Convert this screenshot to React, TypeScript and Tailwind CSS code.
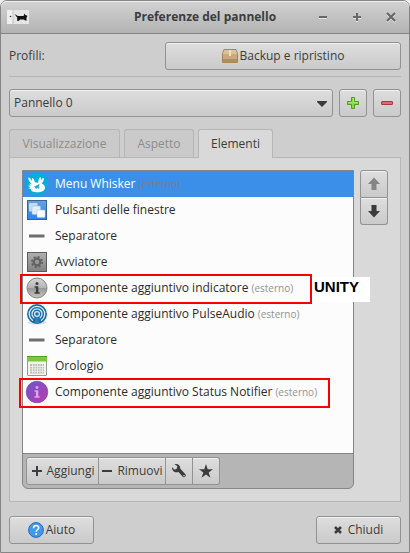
import { useState } from "react";
import type { ReactNode } from "react";
import clsx from "clsx";

const button =
  "flex items-center justify-center border border-[#929292] bg-linear-to-b from-[#dedede] to-[#cacaca] text-[#3c3c3c] shadow-[inset_0_1px_0_#f0f0f0]";

const WhiskerIcon = () => (
  <svg width="24" height="24" viewBox="0 0 24 24">
    <circle cx="12" cy="12" r="11.5" fill="#08acd8" />
    <path
      d="M3.500 5.500C4.300 5 5.800 6.600 7 9.300L6.900 6.300C7.900 5.500 9.400 7.500 9.900 10.300L13.300 10.800C13.300 8 14.200 5 15.300 5.200 16.200 5.400 16 7.500 15.800 9.300 16.500 7.300 17.500 5.700 18.600 6.200 19.700 6.900 18.300 9.700 16.800 11.500 19 12.500 20.300 14.300 20 16.200 19.500 19 16 20.400 12.500 20.300 8.500 20.300 5.800 19 6 17.200L3.200 16 5.500 15.600 2.800 13.600 5.800 13.800 4 11.500 7 12.600C5 10.500 2.600 6.500 3.500 5.500Z"
      fill="#fff"
    />
    <path d="m9 14.700 3.800-1.700 1.700-1.500-.5 2.700-3 2.800-.8-1.500zM12.500 15.500l2-1-.7 2.500z" fill="#08acd8" />
  </svg>
);

const WindowsIcon = () => (
  <svg width="24" height="24" viewBox="0 0 24 24">
    <defs>
      <linearGradient id="win" x2="0" y2="1">
        <stop stopColor="#6aa2d8" />
        <stop offset="1" stopColor="#2c83ea" />
      </linearGradient>
    </defs>
    <rect x="2.500" y="2.500" width="19" height="19" fill="url(#win)" stroke="#376397" />
    <rect x="4" y="5" width="8.500" height="8.500" rx="1" fill="#c4dcf4" />
    <rect x="7" y="8" width="8.500" height="8.500" rx="1" fill="#e2edf8" stroke="#9abde0" strokeWidth=".5" />
    <rect x="12" y="12" width="8" height="7.500" rx="1" fill="#fff" stroke="#9abde0" strokeWidth=".5" />
  </svg>
);

const SeparatorIcon = () => (
  <svg width="24" height="24" viewBox="0 0 24 24">
    <rect x="4" y="10.500" width="15.500" height="3" rx="0.500" fill="#6d6d6d" />
  </svg>
);

const LauncherIcon = () => (
  <svg width="24" height="24" viewBox="0 0 24 24">
    <defs>
      <linearGradient id="launch" x2="0" y2="1">
        <stop stopColor="#b0b0b0" />
        <stop offset="1" stopColor="#818181" />
      </linearGradient>
    </defs>
    <rect x="2.500" y="2.500" width="19" height="19" fill="url(#launch)" stroke="#5c5c5c" />
    <circle cx="12" cy="12" r="3.300" fill="none" stroke="#626262" strokeWidth="2.200" />
    <circle cx="12" cy="12" r="5" fill="none" stroke="#626262" strokeWidth="2" strokeDasharray="2 1.927" />
  </svg>
);

const IndicatorIcon = () => (
  <svg width="24" height="24" viewBox="0 0 24 24">
    <defs>
      <linearGradient id="ind" x2="0" y2="1">
        <stop stopColor="#d8d8d8" />
        <stop offset=".49" stopColor="#b4b4b4" />
        <stop offset=".51" stopColor="#989898" />
        <stop offset="1" stopColor="#c4c4c4" />
      </linearGradient>
    </defs>
    <circle cx="12" cy="12" r="10" fill="url(#ind)" stroke="#868686" />
    <circle cx="12" cy="7.500" r="1.500" fill="#3d3d3d" />
    <path d="M9.500 10.200h3.800v6h1.400v1.600H9.500v-1.600h1.400v-4.400H9.500z" fill="#3d3d3d" />
  </svg>
);

const PulseIcon = () => (
  <svg width="24" height="24" viewBox="0 0 24 24">
    <ellipse cx="12" cy="20.500" rx="9.500" ry="2" fill="#ddd" />
    <circle cx="12" cy="12" r="10" fill="#1c6ba4" />
    <g fill="none" stroke="#d8edf9" strokeWidth="1.300" strokeLinecap="round">
      <path d="M7.500 18.300a7.700 7.700 0 1 1 9 0" />
      <path d="M8.800 15.800a5 5 0 1 1 6.400 0" />
      <circle cx="12" cy="12" r="2.400" />
    </g>
    <path d="m11.200 15h1.600l1.600 6.500H9.600z" fill="#2f83ba" />
  </svg>
);

const ClockIcon = () => (
  <svg width="24" height="24" viewBox="0 0 24 24">
    <rect x="2.500" y="3.500" width="19" height="18" rx=".5" fill="#f4f4f0" stroke="#949c8c" />
    <path d="M2 2.500h20v5H2z" fill="#7cc73d" />
    <path d="M2 2.500h20" stroke="#589e24" />
    <rect x="5" y="10" width="14" height="9.500" fill="#bdbdb5" />
    <path d="M5 12.500h14M5 14.900h14M5 17.300h14M7.500 10v9.500M10 10v9.500M12.500 10v9.500M15 10v9.500M17.500 10v9.500" stroke="#f3f3ef" strokeWidth=".8" />
  </svg>
);

const StatusIcon = () => (
  <svg width="24" height="24" viewBox="0 0 24 24">
    <defs>
      <linearGradient id="status" x2="1" y2="1">
        <stop stopColor="#6659cb" />
        <stop offset="1" stopColor="#c337ac" />
      </linearGradient>
    </defs>
    <circle cx="12" cy="12" r="10.800" fill="url(#status)" stroke="#784aa5" strokeWidth=".7" />
    <circle cx="12" cy="7.500" r="1.400" fill="#d7a8e6" />
    <path d="M9.500 10.200h3.800v6h1.400v1.600H9.500v-1.600h1.400v-4.400H9.500z" fill="#d7a8e6" />
  </svg>
);

type Item = { name: string; icon: ReactNode; external?: boolean; mark?: ReactNode };

const items: Item[] = [
  { name: "Menu Whisker", icon: <WhiskerIcon />, external: true },
  { name: "Pulsanti delle finestre", icon: <WindowsIcon /> },
  { name: "Separatore", icon: <SeparatorIcon /> },
  { name: "Avviatore", icon: <LauncherIcon /> },
  {
    name: "Componente aggiuntivo indicatore",
    icon: <IndicatorIcon />,
    external: true,
    mark: (
      <>
        <span className="pointer-events-none absolute -top-px -left-[3px] h-[30px] w-[292px] border-2 border-[#f60000]" />
        <strong className="absolute top-[2px] left-[289px] h-[25px] w-[58px] bg-white pl-[2px] font-['Liberation_Sans',Arial,sans-serif] text-[15px] leading-5 text-black">
          UNITY
        </strong>
      </>
    ),
  },
  { name: "Componente aggiuntivo PulseAudio", icon: <PulseIcon />, external: true },
  { name: "Separatore", icon: <SeparatorIcon /> },
  { name: "Orologio", icon: <ClockIcon /> },
  {
    name: "Componente aggiuntivo Status Notifier",
    icon: <StatusIcon />,
    external: true,
    mark: <span className="pointer-events-none absolute -top-px -left-1 h-[30px] w-[311px] border-2 border-[#f60000]" />,
  },
];

const TitleBar = () => (
  <header className="flex h-[33px] items-center rounded-t-md border-b border-[#858585] bg-linear-to-b from-[#d2d2d2] to-[#b3b3b3] pr-3 pl-1.5 shadow-[inset_0_1px_0_#eeeeee]">
    <svg width="22" height="14" viewBox="0 0 22 14" className="shrink-0">
      <rect width="5.500" height="14" rx=".5" fill="#eee" />
      <rect x="6.500" width="15.500" height="14" fill="#e5e5e5" />
      <circle cx="3.500" cy="6.500" r=".8" fill="#333" />
      <path d="m7.500 4 2.500 1.500 1 .5h5.500l1-2.500.8 1.500 2.200.8-1 2v2.700H18l-1-1h-4l-1 1.300h-2l.3-3z" fill="#111" />
    </svg>
    <h1 className="flex-1 pl-16 text-center text-[12px] font-bold text-[#3d3d3d]">Preferenze del pannello</h1>
    <div className="flex gap-[22px] text-[#686868]">
      <button aria-label="Minimizza" className="size-3">
        <svg width="12" height="12" viewBox="0 0 12 12" stroke="currentColor" strokeWidth="2">
          <path d="M2 7.500h8" stroke="#e4e4e4" strokeWidth="1" />
          <path d="M2 6h8" />
        </svg>
      </button>
      <button aria-label="Massimizza" className="size-3">
        <svg width="12" height="12" viewBox="0 0 12 12" stroke="currentColor" strokeWidth="2">
          <path d="M2 7h8M6 3v8" stroke="#e4e4e4" />
          <path d="M2 6h8M6 2v8" />
        </svg>
      </button>
      <button aria-label="Chiudi finestra" className="size-3">
        <svg width="12" height="12" viewBox="0 0 12 12" stroke="currentColor" strokeWidth="2.200">
          <path d="m2 3 8 8m0-8-8 8" stroke="#e4e4e4" />
          <path d="m2 2 8 8m0-8-8 8" />
        </svg>
      </button>
    </div>
  </header>
);

const tabs = [
  { name: "Visualizzazione", width: "w-[111px]" },
  { name: "Aspetto", width: "w-[70px]" },
  { name: "Elementi", width: "w-[75px]" },
];

const App = () => {
  const [tab, setTab] = useState("Elementi");
  const [selected, setSelected] = useState(0);

  return (
    <div className="bg-[#eeeeee] font-['Open_Sans','Noto_Sans',sans-serif] text-[12px] leading-4 text-[#3c3c3c]">
      <div className="rounded-t-[7px] border border-[#858585] bg-[#cecece]">
        <TitleBar />
        <main className="px-2 py-2">
          {/* Profiles */}
          <div className="flex items-center gap-[119px]">
            <span className="w-[37px]">Profili:</span>
            <button className={clsx(button, "h-7 flex-1 gap-0.5 rounded-[3px]")}>
              <svg width="16" height="16" viewBox="0 0 16 16">
                <path d="M2 1.500h12l1.500 4v9H.5v-9z" fill="#c8aa7c" stroke="#a78456" />
                <path d="M2.300 2h11.400L15 6H1z" fill="#d9c4a0" />
                <path d="M1 11h14v3.500H1z" fill="#af8d5d" />
                <path d="M7 2h2v6H7z" fill="#efe2cc" />
              </svg>
              Backup e ripristino
            </button>
          </div>
          <hr className="mt-1.5 border-[#b4b4b4]" />

          {/* Panel picker */}
          <div className="mt-3 flex gap-1.5">
            <div className="relative flex-1">
              <select aria-label="Pannello" className={clsx(button, "h-7 w-full appearance-none rounded-[3px] pr-6 pl-1")}>
                <option>Pannello 0</option>
              </select>
              <svg width="10" height="6" viewBox="0 0 10 6" className="pointer-events-none absolute top-[12px] right-1.5">
                <path d="M0 0h10v1L5 6 0 1z" fill="#3c3c3c" />
              </svg>
            </div>
            <button aria-label="Aggiungi pannello" className={clsx(button, "size-7 rounded-[3px]")}>
              <svg width="14" height="14" viewBox="0 0 14 14">
                <path d="M5.500 1.500h3v4h4v3h-4v4h-3v-4h-4v-3h4z" fill="#8bd648" stroke="#4f9e1b" />
                <path d="M6.500 2.500h1v4h4M2.500 6.500h4" fill="none" stroke="#bdee8e" strokeWidth=".7" />
              </svg>
            </button>
            <button aria-label="Rimuovi pannello" className={clsx(button, "size-7 rounded-[3px]")}>
              <svg width="14" height="14" viewBox="0 0 14 14">
                <rect x="1.500" y="5.500" width="11" height="3" rx=".5" fill="#dc6c70" stroke="#b3343b" />
              </svg>
            </button>
          </div>

          {/* Tabs */}
          <div role="tablist" className="mt-3 flex gap-1">
            {tabs.map((t) => (
              <button
                key={t.name}
                role="tab"
                aria-selected={tab === t.name}
                onClick={() => setTab(t.name)}
                className={clsx(
                  "h-7 rounded-t-[3px] border border-b-0 border-[#b6b6b6]",
                  t.width,
                  tab === t.name ? "relative -mb-px h-[29px] bg-[#d9d9d9]" : "bg-[#cacaca] text-[#8d8d8d]"
                )}
              >
                {t.name}
              </button>
            ))}
          </div>

          <section role="tabpanel" className="flex items-start gap-1.5 border border-[#b6b6b6] bg-[#d9d9d9] p-3">
            <div className="min-w-0 flex-1 rounded-b-md border border-[#858585] bg-[#b5b5b5]">
              <ul role="listbox" aria-label="Elementi" className="min-h-[282px] bg-[#fcfcfc] text-[#2b2b2b]">
                {items.map((item, i) => (
                  <li
                    key={i}
                    role="option"
                    aria-selected={selected === i}
                    onClick={() => setSelected(i)}
                    className={clsx("relative flex h-[26px] items-center pl-0.5 whitespace-nowrap", selected === i && "bg-[#3b8fe8] text-white")}
                  >
                    {item.icon}
                    <span className="pl-1.5">{item.name}</span>
                    {item.external && (
                      <span className={clsx("pl-[3px] text-[10px]", selected === i ? "text-[#6b83a0]" : "text-[#929292]")}>(esterno)</span>
                    )}
                    {item.mark}
                  </li>
                ))}
              </ul>
              <div className="flex h-[35px] items-center border-t border-[#858585] pl-[3px]">
                <button className={clsx(button, "h-7 w-[73px] gap-1 rounded-l-[3px]")}>
                  <svg width="12" height="12" viewBox="0 0 12 12" stroke="currentColor" strokeWidth="2">
                    <path d="M1 6h10M6 1v10" />
                  </svg>
                  Aggiungi
                </button>
                <button className={clsx(button, "h-7 w-[67px] gap-1 border-l-0")}>
                  <svg width="12" height="12" viewBox="0 0 12 12" stroke="currentColor" strokeWidth="2">
                    <path d="M1 6h10" />
                  </svg>
                  Rimuovi
                </button>
                <button aria-label="Modifica" className={clsx(button, "h-7 w-[27px] border-l-0")}>
                  <svg width="16" height="16" viewBox="0 0 16 16">
                    <path d="M1 4.200 3.700 6.700 6 5.500 6.200 3 3.500 1.200C6.500.3 9.400 2 9.200 5.500L14.600 11.500C15.600 13 13.500 15 12 13.900L7.500 8.900C4.300 10.200.8 8 1 4.200Z" fill="#3c3c3c" />
                    <circle cx="13" cy="12.700" r=".8" fill="#d0d0d0" />
                  </svg>
                </button>
                <button aria-label="Informazioni" className={clsx(button, "h-7 w-[27px] rounded-r-[3px] border-l-0")}>
                  <svg width="16" height="16" viewBox="0 0 16 16">
                    <path d="m8 1 1.700 5.200H15l-4.300 3.200 1.700 5.300L8 11.500l-4.400 3.200 1.700-5.300L1 6.200h5.300z" fill="#3c3c3c" />
                  </svg>
                </button>
              </div>
            </div>

            <div className="flex flex-col">
              <button aria-label="Sposta in alto" className={clsx(button, "size-7 rounded-t-[3px]")} disabled>
                <svg width="14" height="14" viewBox="0 0 14 14">
                  <path d="m7 .5 6 6.500H9.500v6h-5V7H1z" fill="#868686" />
                </svg>
              </button>
              <button aria-label="Sposta in basso" className={clsx(button, "h-[27px] w-7 rounded-b-[3px] border-t-0")}>
                <svg width="14" height="14" viewBox="0 0 14 14">
                  <path d="M7 13.500 1 7h3.500V1h5v6H13z" fill="#3c3c3c" />
                </svg>
              </button>
            </div>
          </section>

          {/* Footer */}
          <footer className="mt-3.5 flex justify-between">
            <button className={clsx(button, "h-7 w-[85px] gap-0.5 rounded-[3px]")}>
              <svg width="16" height="16" viewBox="0 0 16 16">
                <circle cx="8" cy="8" r="7.400" fill="#409bec" stroke="#256bb8" />
                <path d="M5.500 6.200c0-3.500 5.200-3.300 5.200-.4 0 1.900-2.500 2-2.500 4" fill="none" stroke="#fff" strokeWidth="1.500" />
                <circle cx="8.200" cy="12" r="1" fill="#fff" />
              </svg>
              Aiuto
            </button>
            <button className={clsx(button, "h-7 w-[85px] gap-1.5 rounded-[3px]")}>
              <svg width="8" height="8" viewBox="0 0 8 8" stroke="currentColor" strokeWidth="2.500">
                <path d="m1 1 6 6m0-6L1 7" />
              </svg>
              Chiudi
            </button>
          </footer>
        </main>
      </div>
    </div>
  );
};

export default App;
